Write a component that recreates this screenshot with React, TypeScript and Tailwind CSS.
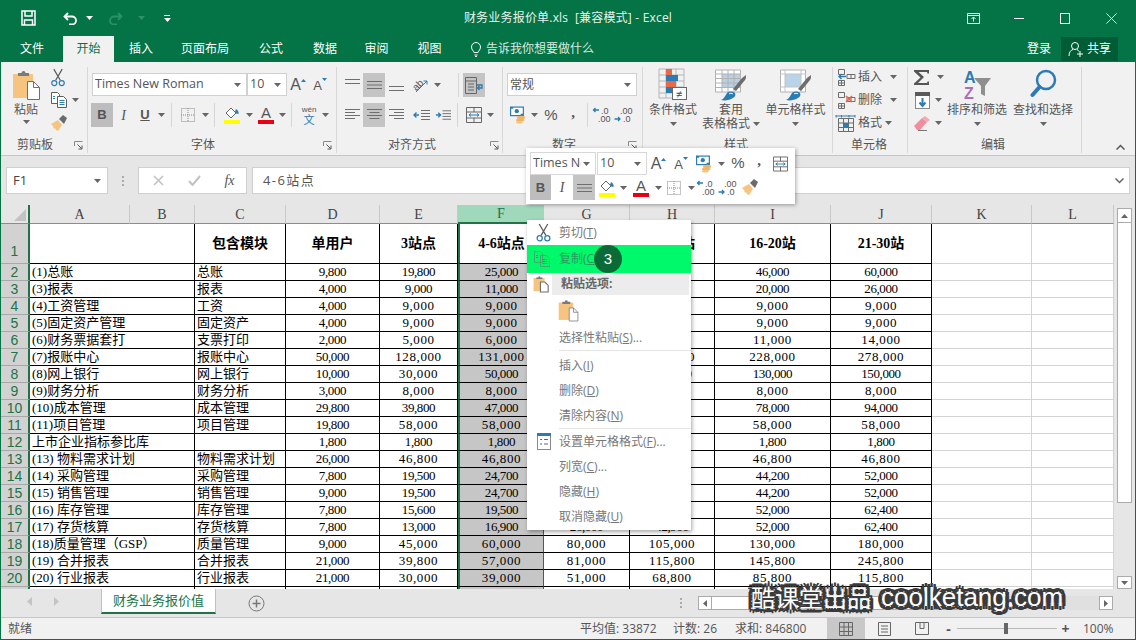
import type { ReactNode } from "react";

const BLUE = "#2b7cb3";
const ORANGE = "#f7c47f";

function Caret({ color = "#666" }: { color?: string }) {
  return (
    <svg className="w-[7px] h-[4px] shrink-0" viewBox="0 0 7 4">
      <path d="M0 0h7L3.5 4z" fill={color} />
    </svg>
  );
}

function Launcher() {
  return (
    <svg className="w-[9px] h-[9px] shrink-0" viewBox="0 0 9 9" fill="none" stroke="#8a8a8a">
      <path d="M.5 5V.5H8.5" />
      <path d="M3.5 3.5L7.5 7.5M8 4.5V8H4.5" stroke="#555" />
    </svg>
  );
}

function Btn({ className, children }: { className: string; children?: ReactNode }) {
  return <div className={`flex items-center justify-center shrink-0 ${className}`}>{children}</div>;
}

function Sep({ className }: { className: string }) {
  return (
    <div className={`flex justify-center shrink-0 ${className}`}>
      <div className="w-px h-[24px] bg-[#d6d6d6]" />
    </div>
  );
}

function Lines({ v }: { v: string }) {
  const d: Record<string, string> = {
    top: "M0 1.5h15M0 5.5h15",
    mid: "M0 3.5h15M0 7h15M0 10.5h15",
    bot: "M0 8.5h15M0 12.5h15",
    left: "M0 1.5h15M0 4.5h10M0 7.5h15M0 10.5h10",
    center: "M0 1.5h15M2.5 4.5h10M0 7.5h15M2.5 10.5h10",
    right: "M0 1.5h15M5 4.5h10M0 7.5h15M5 10.5h10",
  };
  return (
    <svg className="w-[15px] h-[14px]" viewBox="0 0 15 14" fill="none" stroke="#6e6e6e">
      <path d={d[v]} />
    </svg>
  );
}

function Paste({ small = false }: { small?: boolean }) {
  return (
    <svg className={small ? "w-[21px] h-[27px]" : "w-[29px] h-[30px]"} viewBox="0 0 29 30">
      <rect x="1" y="4" width="20" height="24" fill={ORANGE} />
      <path d="M6 6V3h3.5a2 2 0 0 1 4 0H17v3z" fill="#7a7a7a" />
      <path d="M15.5 11.5h6l6 6v12h-12z" fill="#fff" stroke="#6f6f6f" />
      <path d="M21.5 11.5v6h6" fill="none" stroke="#6f6f6f" />
    </svg>
  );
}

function Scissors({ className = "w-[15px] h-[20px]" }: { className?: string }) {
  return (
    <svg className={className} viewBox="0 0 15 20" fill="none">
      <path d="M3 1l7 12M12 1L5 13" stroke="#5a5a5a" strokeWidth="1.3" />
      <circle cx="3.5" cy="16" r="2.7" stroke={BLUE} strokeWidth="1.3" />
      <circle cx="11.5" cy="16" r="2.7" stroke={BLUE} strokeWidth="1.3" />
    </svg>
  );
}

function CopyIcon({ dim = false }: { dim?: boolean }) {
  const a = dim ? "#3fae6c" : "#5d5d5d";
  const b = dim ? "#27a45c" : BLUE;
  return (
    <svg className="w-[16px] h-[16px]" viewBox="0 0 16 16" fill="none" stroke={a}>
      <path d="M.5 .5h6l2 2v9h-8z" fill={dim ? "none" : "#fff"} />
      <path d="M6.5 4.5h6l3 3v8h-9z" fill={dim ? "none" : "#fff"} />
      <path d="M8.5 8.5h5M8.5 10.5h5M8.5 12.5h5M2 4.5h2M2 6.5h2" stroke={b} />
    </svg>
  );
}

function Brush() {
  return (
    <svg className="w-[16px] h-[17px]" viewBox="0 0 16 17">
      <path d="M0 9l7-4 4 5-4 6-2-1-1-2-1 1-1-3z" fill={ORANGE} />
      <path d="M8 4l4-4 4 3-3 6z" fill="#6b6b6b" />
    </svg>
  );
}

function Borders() {
  return (
    <svg className="w-[14px] h-[14px]" viewBox="0 0 14 14" fill="none" stroke="#8a8a8a" strokeDasharray="1 1">
      <path d="M.5 .5h13v13H.5zM7 0v14M0 7h14" />
    </svg>
  );
}

function Fill() {
  return (
    <svg className="w-[17px] h-[18px]" viewBox="0 0 17 18">
      <path d="M2 7l5-5 5 5-5 5z" fill="#fff" stroke="#666" />
      <path d="M12 3c2 1 3 3 2.500 5-2 0-3-1-3.500-2z" fill={BLUE} />
      <rect x="0" y="14" width="16" height="4" fill="#ffff00" />
    </svg>
  );
}

function FontColor() {
  return (
    <div className="flex flex-col items-center leading-none">
      <span className="text-[15px] h-[14px] leading-[14px] text-[#555] font-['Liberation_Sans',sans-serif]">A</span>
      <div className="w-[16px] h-[4px] bg-[#e60012]" />
    </div>
  );
}

function GrowA({ up }: { up: boolean }) {
  return (
    <div className="relative flex items-end text-[#555] font-['Liberation_Sans',sans-serif] leading-none">
      <span className={up ? "text-[16px]" : "text-[13px]"}>A</span>
      <svg className="w-[5px] h-[3px] mb-[11px]" viewBox="0 0 5 3">
        <path d={up ? "M0 3h5L2.500 0z" : "M0 0h5L2.500 3z"} fill={BLUE} />
      </svg>
    </div>
  );
}

function Accounting() {
  return (
    <svg className="w-[17px] h-[18px]" viewBox="0 0 20 20">
      <rect x=".7" y=".7" width="15" height="10" fill="#fff" stroke={BLUE} strokeWidth="1.4" />
      <circle cx="8" cy="5.500" r="2.500" fill={BLUE} />
      <path d="M.7 .7h3v2h-3zM12.500 8.500h3v2h-3z" fill={BLUE} />
      <ellipse cx="13" cy="13" rx="5" ry="2" fill="#f2b365" />
      <ellipse cx="12" cy="16" rx="5" ry="2" fill="#f2b365" />
      <ellipse cx="11" cy="18.500" rx="4" ry="1.500" fill="#f7c47f" />
    </svg>
  );
}

function DecInc({ more }: { more: boolean }) {
  return (
    <svg className="w-[20px] h-[18px]" viewBox="0 0 20 18">
      <text x={more ? 9 : 6} y="8" fontSize="9" fill="#555" fontFamily="Liberation Sans, sans-serif">{more ? ".0" : ".00"}</text>
      <text x={more ? 6 : 9} y="16" fontSize="9" fill="#555" fontFamily="Liberation Sans, sans-serif">{more ? ".00" : ".0"}</text>
      <path d={more ? "M7 4H1.500M3.500 2L1.500 4l2 2" : "M.500 13H6M4 11l2 2-2 2"} fill="none" stroke={BLUE} strokeWidth="1.300" />
    </svg>
  );
}

function WrapText() {
  return (
    <svg className="w-[18px] h-[17px]" viewBox="0 0 18 17" fill="none" stroke="#666">
      <path d="M.5 .5h11v16H.5zM.5 4h11M3 7h6M3 10h6M3 13h6" />
      <path d="M12 8h5v3h-4M14.500 9l-2 2 2 2" stroke={BLUE} strokeWidth="1.300" />
    </svg>
  );
}

function Merge({ className = "w-[16px] h-[16px]" }: { className?: string }) {
  return (
    <svg className={className} viewBox="0 0 16 16" fill="none" stroke="#666">
      <path d="M.5 .5h15v15H.5zM.5 5h15M.5 11h15M8 .5V5M8 11v4.500" />
      <path d="M3 8h10M5 6.500L3 8l2 1.500M11 6.500L13 8l-2 1.500" stroke={BLUE} />
    </svg>
  );
}

function Orient() {
  return (
    <svg className="w-[18px] h-[16px]" viewBox="0 0 18 16">
      <text x="1" y="12" fontSize="10" fill="#555" transform="rotate(-45 6 8)" fontFamily="Liberation Sans, sans-serif">ab</text>
      <path d="M5 15L16 4M12.500 4H16v3.500" fill="none" stroke={BLUE} strokeWidth="1" />
    </svg>
  );
}

function CondFormat() {
  return (
    <svg className="w-[30px] h-[33px]" viewBox="0 0 30 33" fill="none">
      <path d="M1 1h25v29H1zM1 7h25M1 13h25M1 19h25M1 25h25M8 1v29M18 1v29" stroke="#b6b6b6" />
      <rect x="8" y="1" width="6" height="6" fill="#e8694a" />
      <rect x="8" y="7" width="12" height="6" fill={BLUE} />
      <rect x="8" y="13" width="10" height="6" fill="#e8694a" />
      <rect x="8" y="19" width="6" height="6" fill={BLUE} />
      <rect x="14.500" y="19.500" width="14" height="12" fill="#fff" stroke="#666" />
      <text x="18" y="30" fontSize="11" fill="#444" fontFamily="Liberation Sans, sans-serif">≠</text>
    </svg>
  );
}

function BrushOver({ table }: { table: boolean }) {
  return (
    <svg className="w-[32px] h-[32px]" viewBox="0 0 32 32" fill="none">
      <path d="M.5 1h25v22H.5z" stroke="#b2b2b2" fill="#fff" />
      {table ? (
        <>
          <rect x="7" y="5" width="18" height="14" fill="#b9cfe2" />
          <path d="M.5 5h25M.5 9.500h25M.5 14h25M.5 18.500h25M7 1v22M13 1v22M19 1v22" stroke="#b2b2b2" />
        </>
      ) : (
        <>
          <rect x="5" y="5" width="16" height="13" fill="#b9d3e8" />
          <path d="M.5 5h25M.5 18h25M5 1v22M21 1v22" stroke="#c4c4c4" />
        </>
      )}
      <path d="M18 20l9-11 4-3c0 2 0 4-1 5l-9 11z" fill="#6d6d6d" />
      <path d="M6 31c3-1 4-4 6-7 2-2 6-2 8 0 1 2 0 4-2 5-3 2-8 3-12 2z" fill={BLUE} />
      <path d="M14 25c1-1 3-1 4 0" stroke="#fff" />
    </svg>
  );
}

function CellsIcon({ kind }: { kind: string }) {
  return (
    <svg className="w-[21px] h-[17px]" viewBox="0 0 21 17" fill="none" stroke="#6c6c6c">
      {kind === "fmt" ? (
        <>
          <path d="M3.500 3.500h15v13h-15zM3.500 8h15M3.500 12.500h15M8.500 3.500v13M13.500 3.500v13" />
          <rect x="8.500" y="8" width="5" height="4.500" fill={BLUE} stroke="none" />
          <path d="M1 1h19M1 .0v2.500M20 0v2.500M6.500 0v2.500M14 0v2.500" stroke={BLUE} />
        </>
      ) : (
        <>
          <path d="M3.500 .5h6v5h-6zM3.500 11.500h6v5h-6zM6.500 11.500v5M3.500 14h6" />
          <path d="M12 5.500h8v4h-8zM16 5.500v4" />
          {kind === "ins" ? (
            <path d="M11 7.500H4M6.500 5L4 7.500 6.500 10" stroke={BLUE} strokeWidth="1.400" />
          ) : (
            <path d="M11 4l6 6M17 4l-6 6" stroke="#e8694a" strokeWidth="1.600" />
          )}
        </>
      )}
    </svg>
  );
}

function Sigma() {
  return (
    <svg className="w-[16px] h-[15px]" viewBox="0 0 16 15">
      <path d="M0 0h15v3.500h-1.500L13 2H4.500L10 7l-6 6h9l.500-1.500H15V15H0v-1.500L6.500 7.500 0 1.500z" fill="#555" />
    </svg>
  );
}

function FillDown() {
  return (
    <svg className="w-[15px] h-[17px]" viewBox="0 0 15 17" fill="none">
      <rect x=".5" y=".5" width="14" height="16" fill="#fff" stroke="#888" />
      <rect x="0" y="0" width="15" height="4" fill="#5a5a5a" />
      <path d="M7.500 6v8M4.500 10.500l3 3.500 3-3.500" stroke={BLUE} strokeWidth="2" />
    </svg>
  );
}

function Eraser() {
  return (
    <svg className="w-[17px] h-[15px]" viewBox="0 0 17 15">
      <path d="M0 10l8-8 5 4-7 8H3z" fill="#f08ea0" />
      <path d="M8 2l3-2 5 4-3 2z" fill="#f5a8b5" />
      <path d="M4 14.500h9" stroke="#777" />
    </svg>
  );
}

function SortFilter() {
  return (
    <svg className="w-[29px] h-[32px]" viewBox="0 0 29 32">
      <text x="1" y="14" fontSize="16" fontWeight="bold" fill={BLUE} fontFamily="Liberation Sans, sans-serif">A</text>
      <text x="1" y="30" fontSize="16" fontWeight="bold" fill="#a970b8" fontFamily="Liberation Sans, sans-serif">Z</text>
      <path d="M11 9h17l-6 8v10l-4-2v-8z" fill="#8f8f8f" />
    </svg>
  );
}

function Magnifier() {
  return (
    <svg className="w-[27px] h-[33px]" viewBox="0 0 27 33" fill="none">
      <circle cx="16" cy="12" r="9" stroke={BLUE} strokeWidth="2.500" />
      <path d="M9.500 19L2.500 27" stroke={BLUE} strokeWidth="4" strokeLinecap="round" />
    </svg>
  );
}

function FormatCells() {
  return (
    <svg className="w-[14px] h-[17px]" viewBox="0 0 14 17" fill="none">
      <rect x=".5" y=".5" width="13" height="16" fill="#fff" stroke="#8a8a8a" />
      <rect width="14" height="3" fill={BLUE} />
      <path d="M3 6.500h2M7 6.500h4M3 11h2M7 11h4" stroke="#666" />
    </svg>
  );
}

function GroupBox({ className, label, labelClass, launcher, launcherClass, children }: { className: string; label: string; labelClass: string; launcher?: boolean; launcherClass?: string; children: ReactNode }) {
  return (
    <div className={`h-[86px] my-[5px] flex flex-col border-r border-[#d8d8d8] shrink-0 ${className}`}>
      <div className="h-[70px]">{children}</div>
      <div className="h-[16px] flex items-center">
        <div className={`text-center text-[12px] text-[#555] ${labelClass}`}>{label}</div>
        {launcher && <div className={launcherClass}><Launcher /></div>}
      </div>
    </div>
  );
}

function Dropdown({ className, text, textClass = "text-[12.5px]" }: { className: string; text: string; textClass?: string }) {
  return (
    <div className={`h-[23px] bg-white border border-[#d0d0d0] flex items-center pl-[2px] pr-[5px] shrink-0 overflow-hidden ${className}`}>
      <span className={`flex-1 min-w-0 mr-[2px] text-[#555] whitespace-nowrap overflow-hidden ${textClass}`}>{text}</span>
      <Caret />
    </div>
  );
}

function LargeBtn({ className, icon, lines }: { className: string; icon: ReactNode; lines: string[] }) {
  return (
    <div className={`flex flex-col items-center shrink-0 ${className}`}>
      <div className="h-[35px] flex items-center">{icon}</div>
      <div className="h-[16px] leading-[16px] text-[12px] text-[#555] whitespace-nowrap">{lines[0]}</div>
      <div className="h-[12px] flex items-center gap-[3px] text-[12px] text-[#555] whitespace-nowrap">
        {lines[1]}
        <Caret />
      </div>
    </div>
  );
}

function Ribbon() {
  return (
    <div className="h-[94px] bg-[#f1f1f1] border-b border-[#c6c6c6] flex shrink-0">
      <GroupBox className="w-[87px]" label="剪贴板" labelClass="w-[68px]" launcher launcherClass="ml-[5px]">
        <div className="flex">
          <div className="w-[50px] flex flex-col items-center pt-[3px]">
            <div className="h-[30px]"><Paste /></div>
            <div className="h-[20px] text-[12px] leading-[20px] text-[#555]">粘贴</div>
            <Caret />
          </div>
          <div className="flex flex-col gap-[3px]">
            <Btn className="h-[20px] w-[14px]"><Scissors className="w-[14px] h-[19px]" /></Btn>
            <div className="h-[20px] flex items-center gap-[5px]"><CopyIcon /><Caret /></div>
            <Btn className="h-[20px] w-[16px]"><Brush /></Btn>
          </div>
        </div>
      </GroupBox>

      <GroupBox className="w-[249px]" label="字体" labelClass="w-[230px]" launcher launcherClass="ml-[5px]">
        <div className="flex items-center pl-[4px] pt-[6px] h-[29px]">
          <Dropdown className="w-[155px]" text="Times New Roman" />
          <Dropdown className="w-[40px]" text="10" />
          <Btn className="w-[22px] h-[23px]"><GrowA up /></Btn>
          <Btn className="w-[22px] h-[23px]"><GrowA up={false} /></Btn>
        </div>
        <div className="flex items-center pl-[3px] mt-[7px] h-[24px] text-[#555]">
          <Btn className="w-[22px] h-[24px] bg-[#bdbdbd] font-['Liberation_Sans',sans-serif] font-bold text-[13px]">B</Btn>
          <Btn className="w-[21px] h-[24px] font-['Liberation_Serif',serif] italic text-[14px]">I</Btn>
          <Btn className="w-[22px] h-[24px] font-['Liberation_Sans',sans-serif] font-bold underline text-[13px]">U</Btn>
          <Btn className="w-[11px]"><Caret /></Btn>
          <Sep className="w-[8px]" />
          <Btn className="w-[26px]"><Borders /></Btn>
          <Btn className="w-[8px]"><Caret /></Btn>
          <Sep className="w-[10px]" />
          <Btn className="w-[26px]"><Fill /></Btn>
          <Btn className="w-[8px]"><Caret /></Btn>
          <Btn className="w-[26px]"><FontColor /></Btn>
          <Btn className="w-[6px]"><Caret /></Btn>
          <Sep className="w-[12px]" />
          <Btn className="w-[24px]">
            <div className="flex flex-col items-center leading-none">
              <span className="text-[8px] leading-[9px] text-[#555] font-['Liberation_Sans',sans-serif]">wén</span>
              <span className="text-[11px] leading-[11px] text-[#2b7cb3]">文</span>
            </div>
          </Btn>
          <Btn className="w-[8px]"><Caret /></Btn>
        </div>
      </GroupBox>

      <GroupBox className="w-[166px]" label="对齐方式" labelClass="w-[150px]" launcher launcherClass="ml-[3px]">
        <div className="flex items-center pl-[4px] pt-[6px] h-[30px]">
          <Btn className="w-[22px] h-[24px]"><Lines v="top" /></Btn>
          <Btn className="w-[22px] h-[24px] bg-[#c4c4c4]"><Lines v="mid" /></Btn>
          <Btn className="w-[22px] h-[24px]"><Lines v="bot" /></Btn>
          <Btn className="w-[26px]"><Orient /></Btn>
          <Btn className="w-[8px]"><Caret /></Btn>
          <Sep className="w-[22px] justify-end pr-[4px]" />
          <Btn className="w-[22px] h-[24px] bg-[#c4c4c4]"><WrapText /></Btn>
        </div>
        <div className="flex items-center pl-[4px] mt-[6px] h-[24px]">
          <Btn className="w-[22px] h-[24px]"><Lines v="left" /></Btn>
          <Btn className="w-[22px] h-[24px] bg-[#c4c4c4]"><Lines v="center" /></Btn>
          <Btn className="w-[22px] h-[24px]"><Lines v="right" /></Btn>
          <Btn className="w-[28px]">
            <svg className="w-[17px] h-[13px]" viewBox="0 0 17 13" fill="none" stroke="#6e6e6e">
              <path d="M8 1.500h9M8 4.500h9M8 7.500h9M8 10.500h9M0 12.500" />
              <path d="M6 6H1M3.500 3.500L1 6l2.500 2.500" stroke={BLUE} strokeWidth="1.400" />
            </svg>
          </Btn>
          <Btn className="w-[16px]">
            <svg className="w-[17px] h-[13px]" viewBox="0 0 17 13" fill="none" stroke="#6e6e6e">
              <path d="M8 1.500h9M8 4.500h9M8 7.500h9M8 10.500h9" />
              <path d="M1 6h5M3.500 3.500L6 6 3.500 8.500" stroke={BLUE} strokeWidth="1.400" />
            </svg>
          </Btn>
          <Sep className="w-[12px]" />
          <Btn className="w-[22px]"><Merge /></Btn>
          <Btn className="w-[10px]"><Caret /></Btn>
        </div>
      </GroupBox>

      <GroupBox className="w-[140px]" label="数字" labelClass="w-[122px]" launcher launcherClass="ml-[3px]">
        <div className="pl-[4px] pt-[6px] h-[29px]">
          <Dropdown className="w-[130px]" text="常规" textClass="text-[12px]" />
        </div>
        <div className="flex items-center pl-[4px] mt-[7px] h-[24px] text-[#555]">
          <Btn className="w-[22px]"><Accounting /></Btn>
          <Btn className="w-[10px]"><Caret /></Btn>
          <Btn className="w-[24px] text-[15px] font-['Liberation_Sans',sans-serif]">%</Btn>
          <Btn className="w-[20px] pb-[6px] text-[15px] font-bold font-['Liberation_Serif',serif]">,</Btn>
          <Sep className="w-[8px]" />
          <Btn className="w-[22px]"><DecInc more /></Btn>
          <Btn className="w-[22px]"><DecInc more={false} /></Btn>
        </div>
      </GroupBox>

      <GroupBox className="w-[190px]" label="样式" labelClass="w-[186px]">
        <div className="flex">
          <LargeBtn className="w-[60px]" icon={<CondFormat />} lines={["条件格式", ""]} />
          <LargeBtn className="w-[56px]" icon={<BrushOver table />} lines={["套用", "表格格式"]} />
          <LargeBtn className="w-[73px]" icon={<BrushOver table={false} />} lines={["单元格样式", ""]} />
        </div>
      </GroupBox>

      <GroupBox className="w-[75px]" label="单元格" labelClass="w-[72px]">
        <div className="flex flex-col gap-[3px] text-[12px] text-[#555]">
          <div className="h-[20px] flex items-center"><Btn className="w-[25px]"><CellsIcon kind="ins" /></Btn><span>插入</span><div className="ml-[8px]"><Caret /></div></div>
          <div className="h-[20px] flex items-center"><Btn className="w-[25px]"><CellsIcon kind="del" /></Btn><span>删除</span><div className="ml-[8px]"><Caret /></div></div>
          <div className="h-[20px] flex items-center"><Btn className="w-[25px]"><CellsIcon kind="fmt" /></Btn><span>格式</span><div className="ml-[3px]"><Caret /></div></div>
        </div>
      </GroupBox>

      <GroupBox className="w-[174px]" label="编辑" labelClass="w-[170px]">
        <div className="flex">
          <div className="w-[38px] flex flex-col gap-[3px] pl-[5px]">
            <div className="h-[20px] flex items-center gap-[6px]"><Btn className="w-[18px]"><Sigma /></Btn><Caret /></div>
            <div className="h-[20px] flex items-center gap-[4px]"><Btn className="w-[18px]"><FillDown /></Btn><Caret /></div>
            <div className="h-[20px] flex items-center gap-[4px]"><Btn className="w-[18px]"><Eraser /></Btn><Caret /></div>
          </div>
          <LargeBtn className="w-[62px]" icon={<SortFilter />} lines={["排序和筛选", ""]} />
          <LargeBtn className="w-[70px]" icon={<Magnifier />} lines={["查找和选择", ""]} />
        </div>
      </GroupBox>

      <div className="flex-1 flex items-end justify-end pr-[10px] pb-[5px]">
        <svg className="w-[9px] h-[6px]" viewBox="0 0 9 6" fill="none" stroke="#555" strokeWidth="1.500">
          <path d="M.5 5.500l4-4 4 4" />
        </svg>
      </div>
    </div>
  );
}

function FormulaBar() {
  return (
    <div className="h-[49px] shrink-0 flex items-start pt-[11px] pl-[5px] bg-[#e6e6e6]">
      <div className="w-[102px] h-[27px] bg-white border border-[#d0d0d0] flex items-center pl-[6px] pr-[6px] text-[13px] text-[#444]">
        <span className="flex-1">F1</span>
        <Caret />
      </div>
      <div className="w-[30px] h-[27px] flex flex-col items-center justify-center gap-[2px]">
        <div className="w-[2px] h-[2px] bg-[#aaa]" />
        <div className="w-[2px] h-[2px] bg-[#aaa]" />
        <div className="w-[2px] h-[2px] bg-[#aaa]" />
      </div>
      <div className="w-[109px] h-[27px] bg-white border border-[#d0d0d0] flex items-center">
        <Btn className="w-[38px]">
          <svg className="w-[11px] h-[11px]" viewBox="0 0 11 11" stroke="#c2c2c2" strokeWidth="1.600"><path d="M1 1l9 9M10 1l-9 9" /></svg>
        </Btn>
        <Btn className="w-[35px]">
          <svg className="w-[13px] h-[11px]" viewBox="0 0 13 11" fill="none" stroke="#c2c2c2" strokeWidth="2"><path d="M1 6l3.500 4L12 1" /></svg>
        </Btn>
        <Btn className="w-[35px] italic font-['Liberation_Serif',serif] text-[14px] text-[#555]">fx</Btn>
      </div>
      <div className="ml-[5px] w-[878px] h-[27px] bg-white border border-[#d0d0d0] flex items-center pl-[10px] pr-[5px]">
        <span className="flex-1 text-[13px] tracking-[1.4px] text-[#555]">4-6站点</span>
        <svg className="w-[9px] h-[6px]" viewBox="0 0 9 6" fill="none" stroke="#666" strokeWidth="1.500"><path d="M.5 .5l4 4 4-4" /></svg>
      </div>
    </div>
  );
}

type Row = [string, string, string, string, string, string, string, string, string, number];

const rows: Row[] = [
  ["(1)总账", "总账", "9,800", "19,800", "25,000", "29,800", "35,000", "46,000", "60,000", 0],
  ["(3)报表", "报表", "4,000", "9,000", "11,000", "13,000", "16,000", "20,000", "26,000", 0],
  ["(4)工资管理", "工资", "4,000", "9,000", "9,000", "9,000", "9,000", "9,000", "9,000", 1],
  ["(5)固定资产管理", "固定资产", "4,000", "9,000", "9,000", "9,000", "9,000", "9,000", "9,000", 1],
  ["(6)财务票据套打", "支票打印", "2,000", "5,000", "6,000", "7,000", "9,000", "11,000", "14,000", 1],
  ["(7)报账中心", "报账中心", "50,000", "128,000", "131,000", "158,000", "178,000", "228,000", "278,000", 1],
  ["(8)网上银行", "网上银行", "10,000", "30,000", "50,000", "70,000", "100,000", "130,000", "150,000", 2],
  ["(9)财务分析", "财务分析", "3,000", "8,000", "8,000", "8,000", "8,000", "8,000", "8,000", 1],
  ["(10)成本管理", "成本管理", "29,800", "39,800", "47,000", "55,000", "65,000", "78,000", "94,000", 0],
  ["(11)项目管理", "项目管理", "19,800", "58,000", "58,000", "58,000", "58,000", "58,000", "58,000", 1],
  ["上市企业指标参比库", "", "1,800", "1,800", "1,800", "1,800", "1,800", "1,800", "1,800", 0],
  ["(13) 物料需求计划", "物料需求计划", "26,000", "46,800", "46,800", "46,800", "46,800", "46,800", "46,800", 1],
  ["(14) 采购管理", "采购管理", "7,800", "19,500", "24,700", "31,000", "36,000", "44,200", "52,000", 0],
  ["(15) 销售管理", "销售管理", "9,000", "19,500", "24,700", "31,000", "36,000", "44,200", "52,000", 0],
  ["(16) 库存管理", "库存管理", "7,800", "15,600", "19,500", "26,000", "42,900", "52,000", "62,400", 0],
  ["(17) 存货核算", "存货核算", "7,800", "13,000", "16,900", "26,000", "42,900", "52,000", "62,400", 0],
  ["(18)质量管理（GSP）", "质量管理", "9,000", "45,000", "60,000", "80,000", "105,000", "130,000", "180,000", 1],
  ["(19) 合并报表", "合并报表", "21,000", "39,800", "57,000", "81,000", "115,800", "145,800", "245,800", 1],
  ["(20) 行业报表", "行业报表", "21,000", "30,000", "39,000", "51,000", "68,800", "85,800", "115,800", 1],
];

const WIDE = "text-[13px] tracking-[0.6px]";
const SERIF = "text-[13px] tracking-[-0.4px]";
const CELL = "flex items-center border-r border-b border-black whitespace-nowrap overflow-hidden";
const PLAIN = "border-r border-b border-[#d4d4d4]";
const ROWHEAD = "flex items-center justify-center bg-[#d2d2d2] border-r-2 border-b border-r-[#217346] border-b-[#a8a8a8] text-[#217346] text-[14px] font-['Liberation_Sans',sans-serif]";

function ColHead({ label, active = false }: { label: string; active?: boolean }) {
  return (
    <div className={`flex items-center justify-center border-b text-[14px] ${active ? "bg-[#9fd8bb] border-[#217346] border-b-2 text-[#217346]" : "bg-[#e6e6e6] border-r border-r-[#c8c8c8] border-b-[#8c8c8c] text-[#444]"}`}>
      {label}
    </div>
  );
}

function Sheet() {
  const head = ["包含模块", "单用户", "3站点", "4-6站点", "7-10站", "11-15站", "16-20站", "21-30站"];
  return (
    <div className="flex h-[384px] shrink-0">
      <div className="w-[1113px] overflow-hidden bg-white">
        <div className="grid grid-cols-[29px_100px_65px_91px_94px_78px_86px_86px_85px_116px_101px_100px_82px] grid-rows-[19px_40px_repeat(21,17px)] font-['Liberation_Serif','Noto_Sans_CJK_SC',serif] text-black">
          <div className="bg-[#e6e6e6] border-r-2 border-b border-r-[#217346] border-b-[#8c8c8c] flex items-end justify-end p-[2px]">
            <svg className="w-[12px] h-[12px]" viewBox="0 0 12 12"><path d="M12 0v12H0z" fill="#c2c2c2" /></svg>
          </div>
          {["A", "B", "C", "D", "E", "F", "G", "H", "I", "J", "K", "L"].map((c) => (
            <ColHead key={c} label={c} active={c === "F"} />
          ))}

          <div className={`${ROWHEAD} !items-end pb-[1px]`}>1</div>
          <div className={`${CELL} col-span-2`} />
          {head.map((h, i) => (
            <div key={h} className={`${CELL} justify-center text-[14px] font-bold ${i === 3 ? "border-x-2 border-x-[#217346]" : ""}`}>{h}</div>
          ))}
          <div className={PLAIN} />
          <div className={PLAIN} />

          {rows.map((r, idx) => {
            const flag = r[9];
            return [
              <div key={`n${idx}`} className={ROWHEAD}>{idx + 2}</div>,
              <div key={`a${idx}`} className={`${CELL} col-span-2 pl-[2px] text-[13px]`}>{r[0]}</div>,
              <div key={`c${idx}`} className={`${CELL} pl-[2px] text-[13px]`}>{r[1]}</div>,
              ...r.slice(2, 9).map((v, i) => {
                const wide = i > 0 && (flag === 1 || (flag === 2 && i === 1));
                return (
                  <div key={`v${idx}-${i}`} className={`${CELL} justify-center ${wide ? WIDE : SERIF} ${i === 2 ? "bg-[#c6c6c6] border-x-2 border-x-[#217346]" : ""}`}>
                    {v}
                  </div>
                );
              }),
              <div key={`k${idx}`} className={PLAIN} />,
              <div key={`l${idx}`} className={PLAIN} />,
            ];
          })}

          <div className={ROWHEAD} />
          <div className={`${CELL} col-span-2`} />
          <div className={CELL} />
          <div className={CELL} />
          <div className={CELL} />
          <div className={`${CELL} bg-[#c6c6c6] border-x-2 border-x-[#217346]`} />
          <div className={CELL} />
          <div className={CELL} />
          <div className={CELL} />
          <div className={CELL} />
          <div className={PLAIN} />
          <div className={PLAIN} />
        </div>
      </div>
      <div className="w-[21px] bg-[#e6e6e6] flex flex-col items-center pt-[3px] px-[3px]">
        <div className="w-[15px] h-[15px] bg-white border border-[#ababab] flex items-center justify-center">
          <svg className="w-[7px] h-[4px]" viewBox="0 0 7 4"><path d="M0 4h7L3.500 0z" fill="#666" /></svg>
        </div>
        <div className="w-[15px] h-[280px] bg-white border border-[#ababab] border-t-0" />
        <div className="flex-1" />
        <div className="w-[15px] h-[13px] bg-white border border-[#ababab] flex items-center justify-center">
          <Caret />
        </div>
      </div>
    </div>
  );
}

function SheetTabs() {
  return (
    <div className="h-[28px] shrink-0 bg-[#e6e6e6] flex items-start">
      <div className="w-[100px] h-[24px] flex items-center pl-[26px] gap-[22px]">
        <svg className="w-[5px] h-[9px]" viewBox="0 0 5 9"><path d="M5 0v9L0 4.500z" fill="#c4c4c4" /></svg>
        <svg className="w-[5px] h-[9px]" viewBox="0 0 5 9"><path d="M0 0v9l5-4.500z" fill="#c4c4c4" /></svg>
      </div>
      <div className="w-[115px] h-[25px] bg-white border-x border-[#c0c0c0] border-b-2 border-b-[#217346] flex items-center justify-center text-[13px] text-[#217346]">
        财务业务报价值
      </div>
      <div className="ml-[32px] h-[28px] flex items-center">
        <svg className="w-[17px] h-[17px]" viewBox="0 0 17 17" fill="none" stroke="#777">
          <circle cx="8.500" cy="8.500" r="7.500" />
          <path d="M8.500 4.500v8M4.500 8.500h8" strokeWidth="1.500" />
        </svg>
      </div>
      <div className="ml-[408px] h-[28px] flex flex-col items-center justify-center gap-[2px] w-[16px]">
        <div className="w-[2px] h-[2px] bg-[#aaa]" />
        <div className="w-[2px] h-[2px] bg-[#aaa]" />
        <div className="w-[2px] h-[2px] bg-[#aaa]" />
      </div>
      <div className="ml-[9px] mt-[7px] w-[415px] h-[14px] flex">
        <div className="w-[14px] h-[14px] bg-white border border-[#ababab] flex items-center justify-center">
          <svg className="w-[4px] h-[7px]" viewBox="0 0 4 7"><path d="M4 0v7L0 3.500z" fill="#666" /></svg>
        </div>
        <div className="w-[250px] bg-white border-y border-[#ababab]" />
        <div className="flex-1 bg-[#e0e0e0]" />
        <div className="w-[14px] h-[14px] bg-white border border-[#ababab] flex items-center justify-center">
          <svg className="w-[4px] h-[7px]" viewBox="0 0 4 7"><path d="M0 0v7l4-3.500z" fill="#666" /></svg>
        </div>
      </div>
    </div>
  );
}

function StatusBar() {
  return (
    <div className="flex-1 bg-[#f1f1f1] border-t border-[#c6c6c6] flex items-center text-[12px] text-[#555]">
      <span className="pl-[7px] w-[579px]">就绪</span>
      <span className="w-[93px] whitespace-nowrap">平均值: 33872</span>
      <span className="w-[62px] whitespace-nowrap">计数: 26</span>
      <span className="w-[92px] whitespace-nowrap">求和: 846800</span>
      <div className="w-[38px] h-full bg-[#c8c8c8] flex items-center justify-center">
        <svg className="w-[14px] h-[14px]" viewBox="0 0 14 14" fill="none" stroke="#666"><path d="M.5 .5h13v13H.5zM.5 5h13M.5 9.500h13M5 .5v13M9.500 .5v13" /></svg>
      </div>
      <Btn className="w-[38px]">
        <svg className="w-[13px] h-[14px]" viewBox="0 0 13 14" fill="none" stroke="#666"><path d="M.5 .5h12v13H.5zM3 4h7M3 7h7M3 10h7" /></svg>
      </Btn>
      <Btn className="w-[38px]">
        <svg className="w-[14px] h-[13px]" viewBox="0 0 14 13" fill="none" stroke="#666"><path d="M.5 .5h13v12H.5zM5 .5v6h4v-6" /></svg>
      </Btn>
      <Btn className="w-[15px] text-[14px] font-bold">-</Btn>
      <div className="w-[100px] flex items-center mx-[1px] relative">
        <div className="w-full h-px bg-[#b8b8b8]" />
        <div className="absolute left-[47px] w-[4px] h-[11px] bg-[#666]" />
      </div>
      <Btn className="w-[15px] text-[14px] font-bold">+</Btn>
      <span className="ml-[10px] text-[#555]">100%</span>
    </div>
  );
}

function MiniToolbar() {
  return (
    <div className="absolute left-[525px] top-[148px] w-[269px] h-[56px] bg-white shadow-[1px_1px_4px_rgba(0,0,0,0.35)] pl-[4px] pt-[4px] flex flex-col text-[#555]">
      <div className="flex items-center h-[23px]">
        <Dropdown className="w-[66px] border-[#d8d8d8]" text="Times New Roman" />
        <Dropdown className="w-[50px] ml-[1px] border-[#d8d8d8]" text="10" />
        <Btn className="w-[23px] h-[23px]"><GrowA up /></Btn>
        <Btn className="w-[22px] h-[23px]"><GrowA up={false} /></Btn>
        <Btn className="w-[24px]"><Accounting /></Btn>
        <Btn className="w-[10px]"><Caret /></Btn>
        <Btn className="w-[24px] text-[15px] font-['Liberation_Sans',sans-serif]">%</Btn>
        <Btn className="w-[18px] pb-[6px] text-[15px] font-bold font-['Liberation_Serif',serif]">,</Btn>
        <Btn className="w-[24px]"><Merge className="w-[15px] h-[16px]" /></Btn>
      </div>
      <div className="flex items-center h-[25px]">
        <Btn className="w-[21px] h-[25px] bg-[#bdbdbd] font-['Liberation_Sans',sans-serif] font-bold text-[13px]">B</Btn>
        <Btn className="w-[22px] h-[25px] font-['Liberation_Serif',serif] italic text-[14px]">I</Btn>
        <Btn className="w-[22px] h-[25px] bg-[#c4c4c4]"><Lines v="mid" /></Btn>
        <Btn className="w-[24px]"><Fill /></Btn>
        <Btn className="w-[8px]"><Caret /></Btn>
        <Btn className="w-[28px]"><FontColor /></Btn>
        <Btn className="w-[6px]"><Caret /></Btn>
        <Btn className="w-[26px]"><Borders /></Btn>
        <Btn className="w-[8px]"><Caret /></Btn>
        <Btn className="w-[22px]"><DecInc more /></Btn>
        <Btn className="w-[21px]"><DecInc more={false} /></Btn>
        <Btn className="w-[23px]"><Brush /></Btn>
      </div>
    </div>
  );
}

function MenuItem({ children, icon }: { children: ReactNode; icon?: ReactNode }) {
  return (
    <div className="h-[25px] flex items-center text-[12px] text-[#777]">
      <div className="w-[32px] flex justify-center pl-[1px]">{icon}</div>
      <span>{children}</span>
    </div>
  );
}

function ContextMenu() {
  return (
    <div className="absolute left-[526px] top-[220px] w-[164px] h-[310px] bg-white shadow-[1px_2px_4px_rgba(0,0,0,0.35)] flex flex-col">
      <MenuItem icon={<Scissors className="w-[15px] h-[19px]" />}>剪切(<u>T</u>)</MenuItem>
      <div className="h-[28px] relative bg-[#00f96a] flex items-center text-[12px] text-[#2b9a5c]">
        <div className="w-[32px] flex justify-center pr-[2px]"><CopyIcon dim /></div>
        <span>复制(<u>C</u>)</span>
        <div className="absolute left-[67px] top-0 w-[28px] h-[28px] rounded-full bg-[#0b6b36] flex items-center justify-center text-white text-[15px] font-['Liberation_Sans',sans-serif]">3</div>
      </div>
      <div className="h-[22px] flex items-center">
        <div className="w-[25px] flex justify-center pl-[3px]">
          <svg className="w-[16px] h-[18px]" viewBox="0 0 29 30">
            <rect x="1" y="4" width="20" height="24" fill={ORANGE} />
            <path d="M6 6V3h3.500a2 2 0 0 1 4 0H17v3z" fill="#7a7a7a" />
            <path d="M13.500 11.500h8l6 6v12h-14z" fill="#fff" stroke="#6f6f6f" strokeWidth="2" />
          </svg>
        </div>
        <div className="flex-1 mr-[2px] h-[22px] bg-[#ececec] pl-[9px] flex items-center text-[12px] font-bold text-[#666]">粘贴选项:</div>
      </div>
      <div className="h-[30px] pl-[31px] flex items-center"><Paste small /></div>
      <MenuItem>选择性粘贴(<u>S</u>)...</MenuItem>
      <div className="ml-[32px] h-px mb-[2px] bg-[#e4e4e4]" />
      <MenuItem>插入(<u>I</u>)</MenuItem>
      <MenuItem>删除(<u>D</u>)</MenuItem>
      <MenuItem>清除内容(<u>N</u>)</MenuItem>
      <div className="ml-[32px] h-px bg-[#e4e4e4]" />
      <MenuItem icon={<FormatCells />}>设置单元格格式(<u>F</u>)...</MenuItem>
      <MenuItem>列宽(<u>C</u>)...</MenuItem>
      <MenuItem>隐藏(<u>H</u>)</MenuItem>
      <MenuItem>取消隐藏(<u>U</u>)</MenuItem>
    </div>
  );
}

const TOPBAR_ICON = "flex items-center justify-center shrink-0";

export default function App() {
  return (
    <div className="relative w-[1136px] h-[640px] overflow-hidden flex flex-col border-x border-b border-[#047345] bg-[#e6e6e6] font-['Open_Sans','Noto_Sans_CJK_SC',sans-serif]">
      {/* title bar */}
      <div className="h-[36px] shrink-0 bg-[#047345] grid grid-cols-[1fr_auto_1fr] items-center text-white">
        <div className="flex items-center">
          <div className={`${TOPBAR_ICON} w-[55px]`}>
            <svg className="w-[15px] h-[16px]" viewBox="0 0 15 16" fill="none" stroke="#fff" strokeWidth="1.500">
              <path d="M1 1h13v14H1zM4 1v5h7V1M3.500 15v-5h8v5" />
            </svg>
          </div>
          <div className={`${TOPBAR_ICON} w-[28px]`}>
            <svg className="w-[15px] h-[13px]" viewBox="0 0 15 13" fill="none" stroke="#fff" strokeWidth="1.800">
              <path d="M5 1L1.500 4.500 5 8M2 4.500h7a4 4 0 0 1 0 8H6" />
            </svg>
          </div>
          <div className={`${TOPBAR_ICON} w-[10px]`}><Caret color="#fff" /></div>
          <div className={`${TOPBAR_ICON} w-[42px]`}>
            <svg className="w-[15px] h-[13px]" viewBox="0 0 15 13" fill="none" stroke="#2d9167" strokeWidth="1.800">
              <path d="M10 1l3.500 3.500L10 8M13 4.500H6a4 4 0 0 0 0 8h3" />
            </svg>
          </div>
          <div className={`${TOPBAR_ICON} w-[10px]`}><Caret color="#2d9167" /></div>
          <div className={`${TOPBAR_ICON} w-[42px] flex-col gap-[2px]`}>
            <div className="w-[6px] h-px bg-white" />
            <Caret color="#fff" />
          </div>
        </div>
        <div className="text-[12px] tracking-[0.2px] text-[#e8f3ee] whitespace-pre">财务业务报价单.xls  [兼容模式] - Excel</div>
        <div className="flex justify-end items-center pr-[1px]">
          <div className={`${TOPBAR_ICON} w-[46px]`}>
            <svg className="w-[13px] h-[11px]" viewBox="0 0 13 11" fill="none" stroke="#fff">
              <path d="M.5 .5h12v10H.5zM.5 2.500h12M6.500 8.500V4.500M4.500 6l2-2 2 2" />
            </svg>
          </div>
          <div className={`${TOPBAR_ICON} w-[46px]`}><div className="w-[10px] h-px bg-white" /></div>
          <div className={`${TOPBAR_ICON} w-[46px]`}><div className="w-[10px] h-[11px] border border-white" /></div>
          <div className={`${TOPBAR_ICON} w-[46px]`}>
            <svg className="w-[11px] h-[11px]" viewBox="0 0 11 11" stroke="#fff"><path d="M.5 .5l10 10M10.500 .5l-10 10" /></svg>
          </div>
        </div>
      </div>

      {/* ribbon tabs */}
      <div className="h-[26px] shrink-0 bg-[#047345] flex items-stretch text-[12px] text-white">
        <div className="w-[62px] flex items-center justify-center">文件</div>
        <div className="w-[51px] flex items-center justify-center bg-[#f1f1f1] text-[#047345]">开始</div>
        <div className="w-[54px] flex items-center justify-center">插入</div>
        <div className="w-[74px] flex items-center justify-center">页面布局</div>
        <div className="w-[58px] flex items-center justify-center">公式</div>
        <div className="w-[50px] flex items-center justify-center">数据</div>
        <div className="w-[53px] flex items-center justify-center">审阅</div>
        <div className="w-[53px] flex items-center justify-center">视图</div>
        <div className="ml-[15px] flex items-center gap-[5px] text-[#d8ebe2]">
          <svg className="w-[10px] h-[15px]" viewBox="0 0 10 15" fill="none" stroke="#fff">
            <path d="M3 10.500C2.500 8.500.5 8 .5 5a4.500 4.500 0 0 1 9 0c0 3-2 3.500-2.500 5.500zM3.500 13h3M4 14.500h2" />
          </svg>
          告诉我你想要做什么
        </div>
        <div className="ml-auto flex items-center pr-[17px]">
          <span className="mr-[10px]">登录</span>
          <div className="w-[57px] h-[24px] bg-[#005c35] flex items-center justify-center gap-[3px]">
            <svg className="w-[16px] h-[16px]" viewBox="0 0 16 16" fill="none" stroke="#fff">
              <circle cx="7" cy="5" r="3.500" />
              <path d="M1 15c0-4 2-6 4-6.500M9 8.500c1 .5 1.500 1 2 2M9 13h6M12 10v6" />
            </svg>
            共享
          </div>
        </div>
      </div>

      <Ribbon />
      <FormulaBar />
      <Sheet />
      <SheetTabs />
      <StatusBar />

      <MiniToolbar />
      <ContextMenu />

      {/* watermark */}
      <div className="absolute left-[750px] top-[584px] flex items-center whitespace-nowrap text-white leading-none [text-shadow:4px_0_0_#3a3a3a,-4px_0_0_#3a3a3a,0_4px_0_#3a3a3a,0_-4px_0_#3a3a3a,3px_3px_0_#3a3a3a,-3px_3px_0_#3a3a3a,3px_-3px_0_#3a3a3a,-3px_-3px_0_#3a3a3a]">
        <span className="text-[24px] font-['Noto_Sans_CJK_SC',sans-serif]">酷课堂出品</span>
        <span className="ml-[10px] text-[26px] font-['Liberation_Sans',sans-serif]">coolketang.com</span>
      </div>
    </div>
  );
}
